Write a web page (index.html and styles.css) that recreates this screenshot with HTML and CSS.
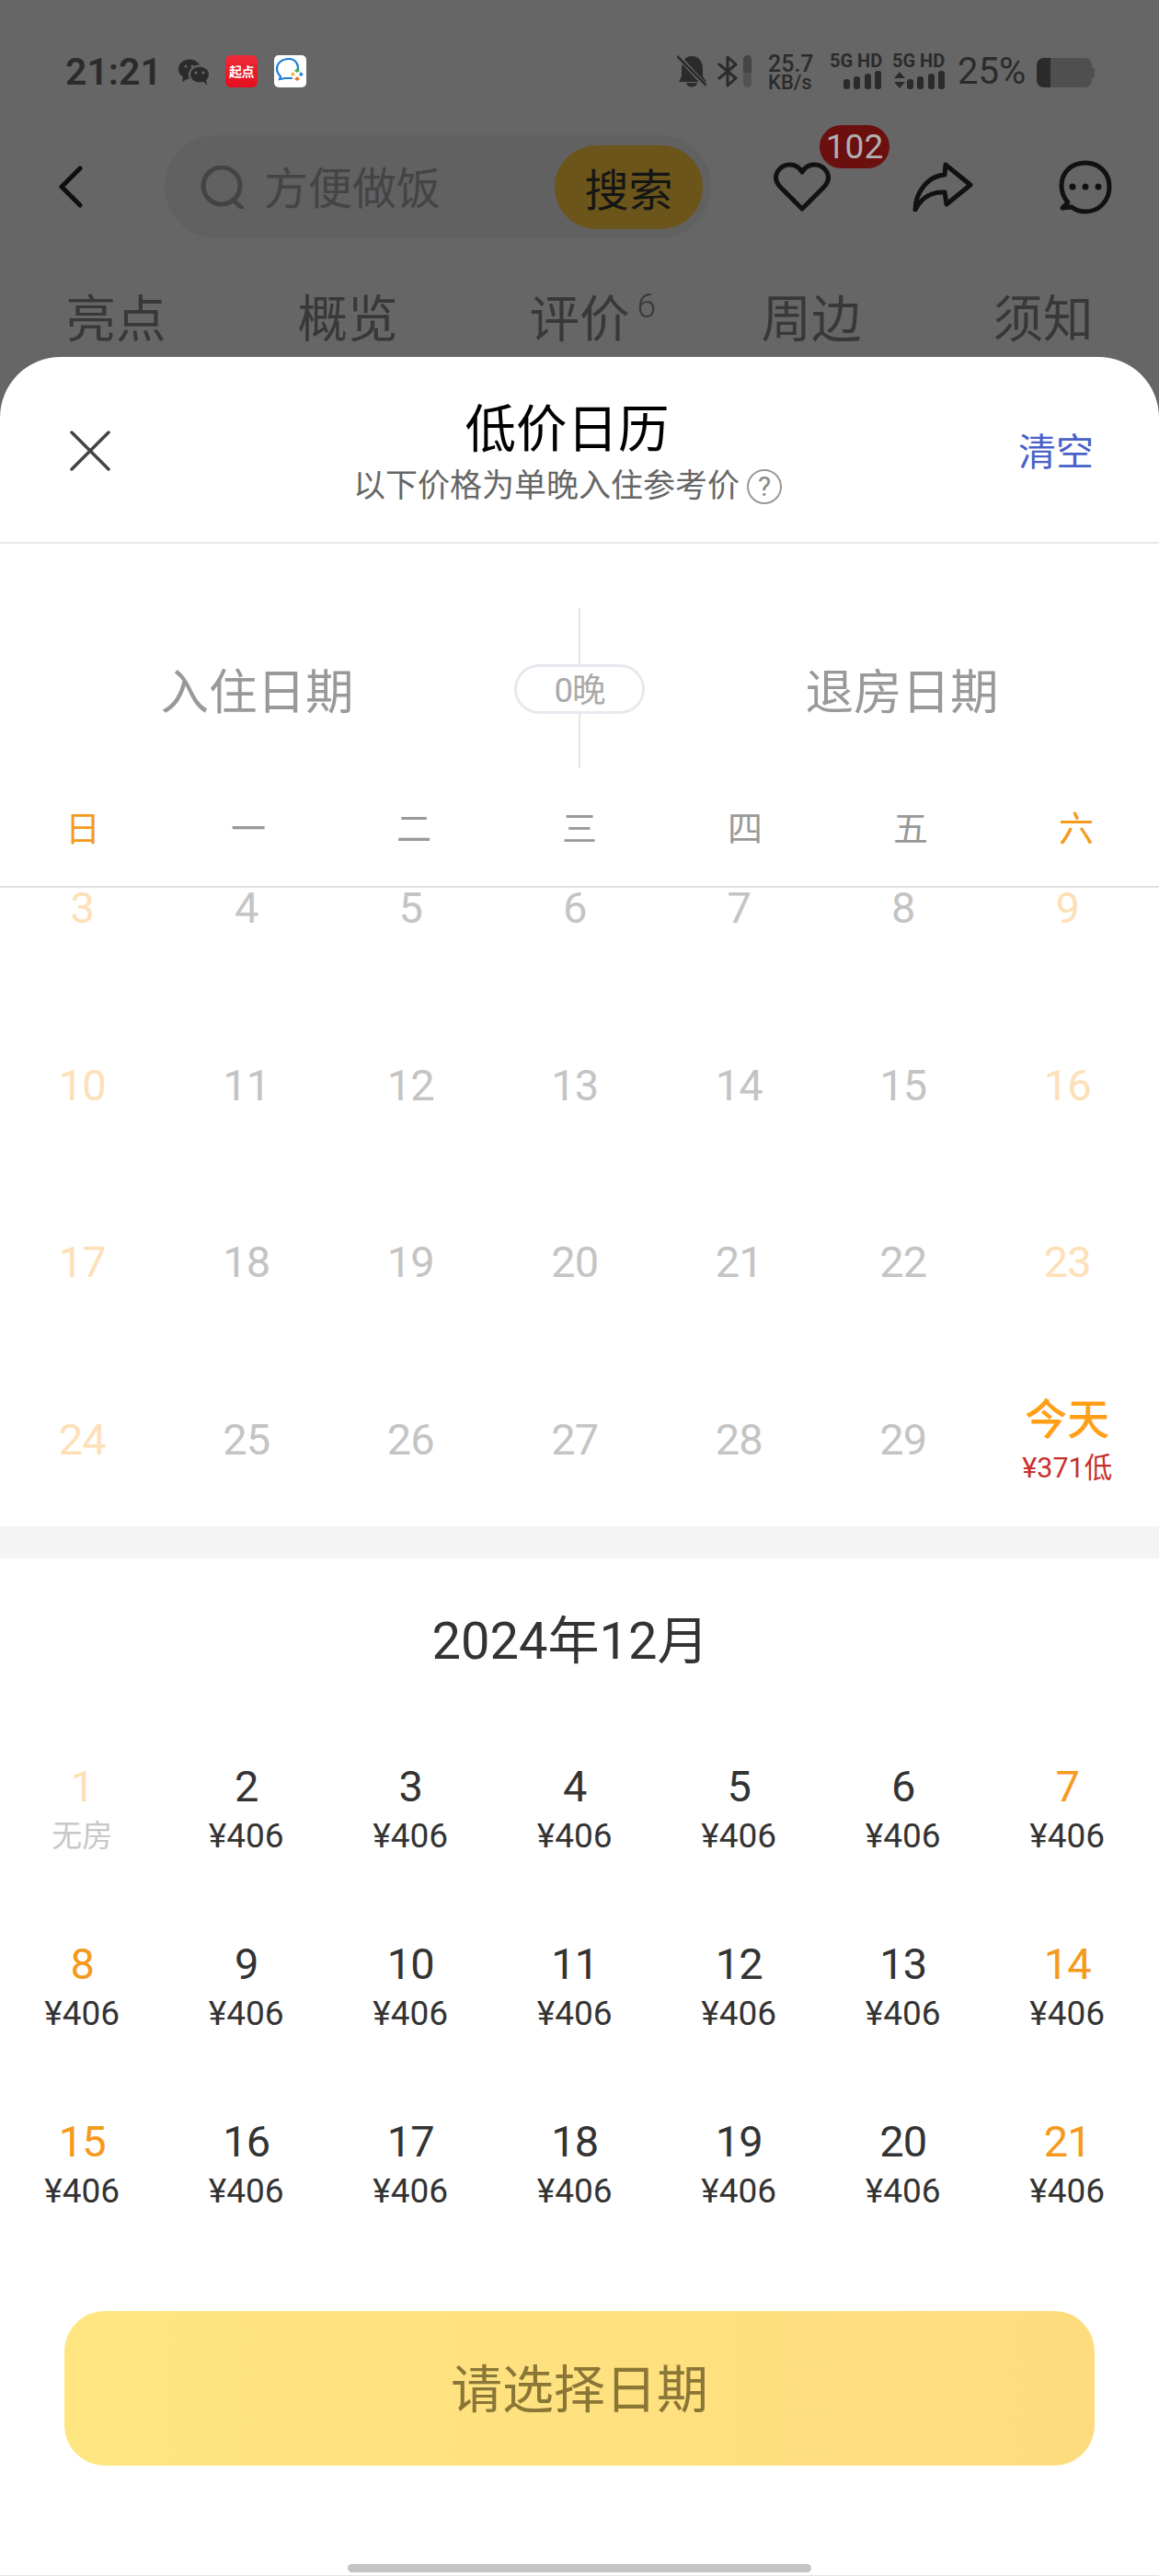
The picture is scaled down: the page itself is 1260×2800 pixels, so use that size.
FILE: index.html
```html
<!DOCTYPE html>
<html lang="zh">
<head>
<meta charset="utf-8">
<title>低价日历</title>
<link rel="stylesheet" href="styles.css">
</head>
<body>
<div class="screen">
  <header class="status">
    <span class="time">21:21</span>
    <svg class="ic-wechat" viewBox="0 0 34 29"><ellipse cx="12" cy="11" rx="12" ry="10.5" fill="#2b2b2b"/><path d="M5 19 L4 25 L11 21Z" fill="#2b2b2b"/><ellipse cx="23" cy="17" rx="11" ry="9.5" stroke="#666" stroke-width="2" fill="#2b2b2b"/><path d="M27 24 L31 29 L30 22Z" fill="#2b2b2b"/><circle cx="8" cy="8" r="1.6" fill="#666"/><circle cx="15" cy="8" r="1.6" fill="#666"/><circle cx="19" cy="15" r="1.6" fill="#666"/><circle cx="27" cy="15" r="1.6" fill="#666"/></svg>
    <span class="ic-qidian">起点</span>
    <svg class="ic-docs" viewBox="0 0 35 35"><rect width="35" height="35" rx="5" fill="#fff"/><path d="M24 21 C29 12 24 4 16 4 C8 4 3 9 3 15 C3 19 5 21 7 23 L6 26 L12 25 L20 25" fill="none" stroke="#1a7fd6" stroke-width="2.2"/><path d="M25 17 L28 20 L25 23 L22 20Z" fill="#fff"/><path d="M25 14 L28 17 L25 19 L22 17Z" fill="#4caf50"/><path d="M29 18 L32 21 L29 23 L27 21Z" fill="#2a88d8"/><path d="M25 23 L28 26 L25 28 L22 26Z" fill="#e8792c"/><path d="M20 18 L23 21 L20 23 L18 21Z" fill="#f2b632"/></svg>
    <svg class="ic-bell" viewBox="0 0 32 35"><path d="M16 1 C25 1 28 9 28 15 L28 23 L32 29 L2 29 L5 23 L5 15 C5 9 8 1 16 1Z M10 30 L22 30 C21 36 11 36 10 30Z" fill="#2b2b2b"/><path d="M2 2 L31 33" stroke="#666" stroke-width="5"/><path d="M0 1 L32 33" stroke="#2b2b2b" stroke-width="2.6"/></svg>
    <svg class="ic-bt" viewBox="0 0 22 35"><path d="M2 10 L20 25 L11 33 L11 2 L20 10 L2 25" fill="none" stroke="#2b2b2b" stroke-width="3" stroke-linejoin="round" stroke-linecap="round"/></svg>
    <span class="wifi-level"></span>
    <div class="speed"><span class="speed-num">25.7</span><span class="speed-unit">KB/s</span></div>
    <div class="net net-a">
      <span class="net-label">5G HD</span>
      <svg class="net-bars" viewBox="0 0 41 20"><rect x="0" y="9" width="7" height="11" rx="3" fill="#2b2b2b"/><rect x="11" y="6" width="7" height="14" rx="3" fill="#2b2b2b"/><rect x="23" y="3" width="7" height="17" rx="3" fill="#2b2b2b"/><rect x="34" y="0" width="7" height="20" rx="3" fill="#2b2b2b"/></svg>
    </div>
    <div class="net net-b">
      <span class="net-label">5G HD</span>
      <svg class="net-bars-wide" viewBox="0 0 56 20"><path d="M1 8 L7 1 L13 8Z M1 12 L7 19 L13 12Z" fill="#2b2b2b"/><rect x="15" y="9" width="7" height="11" rx="3" fill="#2b2b2b"/><rect x="26" y="6" width="7" height="14" rx="3" fill="#2b2b2b"/><rect x="38" y="3" width="7" height="17" rx="3" fill="#2b2b2b"/><rect x="49" y="0" width="7" height="20" rx="3" fill="#2b2b2b"/></svg>
    </div>
    <span class="pct">25%</span>
    <div class="batt"><span class="batt-fill"></span></div>
  </header>

  <nav class="nav">
    <svg class="ic-back" viewBox="0 0 26 46"><path d="M23 3 L3 23 L23 43" fill="none" stroke="#0f0f0f" stroke-width="5" stroke-linecap="round" stroke-linejoin="round"/></svg>
    <div class="search">
      <svg class="ic-search" viewBox="0 0 47 47"><circle cx="23" cy="22" r="20" fill="none" stroke="#444" stroke-width="5"/><path d="M35 37 L45 46" stroke="#444" stroke-width="5" stroke-linecap="round"/></svg>
      <span class="search-text">方便做饭</span>
      <span class="search-btn">搜索</span>
    </div>
    <div class="fav">
      <svg class="ic-heart" viewBox="0 0 62 54"><path d="M31 51 L7 27 C-4 14 8 3 18 3 C24 3 28 6 31 11 C34 6 38 3 44 3 C54 3 66 14 55 27 Z" fill="none" stroke="#111" stroke-width="5" stroke-linejoin="round"/></svg>
      <span class="badge">102</span>
    </div>
    <svg class="ic-share" viewBox="0 0 66 54"><path d="M36 3 L63 25 L37 46 L35 33 C22 32 10 38 3 52 C3 32 18 15 35 14 Z" fill="none" stroke="#111" stroke-width="5" stroke-linejoin="round"/></svg>
    <svg class="ic-chat" viewBox="0 0 58 59"><path d="M10 46 C4 39 3 32 3 28 C3 13 14 3 29 3 C44 3 55 14 55 29 C55 44 44 56 29 56 C23 56 18 54 14 51 L4 52 Z" fill="none" stroke="#111" stroke-width="5" stroke-linejoin="round"/><circle cx="15" cy="29" r="3.5" fill="#111"/><circle cx="29" cy="29" r="3.5" fill="#111"/><circle cx="43" cy="29" r="3.5" fill="#111"/></svg>
  </nav>

  <div class="tabs">
    <span class="tab">亮点</span>
    <span class="tab">概览</span>
    <span class="tab"><span class="tab-inner">评价<sup class="tab-sup">6</sup></span></span>
    <span class="tab">周边</span>
    <span class="tab">须知</span>
  </div>

  <section class="sheet">
    <div class="sheet-head">
      <svg class="ic-close" viewBox="0 0 44 44"><path d="M2 2 L42 42 M42 2 L2 42" stroke="#444" stroke-width="3.5" stroke-linecap="round"/></svg>
      <div class="sheet-title-box">
        <div class="sheet-title">低价日历</div>
        <div class="sheet-sub"><span>以下价格为单晚入住参考价</span><span class="help">?</span></div>
      </div>
      <span class="clear">清空</span>
    </div>

    <div class="range">
      <span class="range-date">入住日期</span>
      <div class="range-mid">
        <span class="range-line range-line-top"></span>
        <span class="nights">0晚</span>
        <span class="range-line range-line-bottom"></span>
      </div>
      <span class="range-date">退房日期</span>
    </div>

    <div class="weekdays">
      <span class="wd wk">日</span><span class="wd">一</span><span class="wd">二</span><span class="wd">三</span><span class="wd">四</span><span class="wd">五</span><span class="wd wk">六</span>
    </div>

    <div class="past">
      <div class="cell off-wk"><span class="d">3</span></div><div class="cell off"><span class="d">4</span></div><div class="cell off"><span class="d">5</span></div><div class="cell off"><span class="d">6</span></div><div class="cell off"><span class="d">7</span></div><div class="cell off"><span class="d">8</span></div><div class="cell off-wk"><span class="d">9</span></div>
      <div class="cell off-wk"><span class="d">10</span></div><div class="cell off"><span class="d">11</span></div><div class="cell off"><span class="d">12</span></div><div class="cell off"><span class="d">13</span></div><div class="cell off"><span class="d">14</span></div><div class="cell off"><span class="d">15</span></div><div class="cell off-wk"><span class="d">16</span></div>
      <div class="cell off-wk"><span class="d">17</span></div><div class="cell off"><span class="d">18</span></div><div class="cell off"><span class="d">19</span></div><div class="cell off"><span class="d">20</span></div><div class="cell off"><span class="d">21</span></div><div class="cell off"><span class="d">22</span></div><div class="cell off-wk"><span class="d">23</span></div>
      <div class="cell off-wk"><span class="d">24</span></div><div class="cell off"><span class="d">25</span></div><div class="cell off"><span class="d">26</span></div><div class="cell off"><span class="d">27</span></div><div class="cell off"><span class="d">28</span></div><div class="cell off"><span class="d">29</span></div><div class="cell today"><span class="today-label">今天</span><span class="today-price">¥371低</span></div>
    </div>

    <div class="band"></div>

    <h2 class="month">2024年12月</h2>

    <div class="days">
      <div class="cell off-wk"><span class="d">1</span><span class="p p-none">无房</span></div>
      <div class="cell"><span class="d">2</span><span class="p">¥406</span></div>
      <div class="cell"><span class="d">3</span><span class="p">¥406</span></div>
      <div class="cell"><span class="d">4</span><span class="p">¥406</span></div>
      <div class="cell"><span class="d">5</span><span class="p">¥406</span></div>
      <div class="cell"><span class="d">6</span><span class="p">¥406</span></div>
      <div class="cell wkend"><span class="d">7</span><span class="p">¥406</span></div>
      <div class="cell wkend"><span class="d">8</span><span class="p">¥406</span></div>
      <div class="cell"><span class="d">9</span><span class="p">¥406</span></div>
      <div class="cell"><span class="d">10</span><span class="p">¥406</span></div>
      <div class="cell"><span class="d">11</span><span class="p">¥406</span></div>
      <div class="cell"><span class="d">12</span><span class="p">¥406</span></div>
      <div class="cell"><span class="d">13</span><span class="p">¥406</span></div>
      <div class="cell wkend"><span class="d">14</span><span class="p">¥406</span></div>
      <div class="cell wkend"><span class="d">15</span><span class="p">¥406</span></div>
      <div class="cell"><span class="d">16</span><span class="p">¥406</span></div>
      <div class="cell"><span class="d">17</span><span class="p">¥406</span></div>
      <div class="cell"><span class="d">18</span><span class="p">¥406</span></div>
      <div class="cell"><span class="d">19</span><span class="p">¥406</span></div>
      <div class="cell"><span class="d">20</span><span class="p">¥406</span></div>
      <div class="cell wkend"><span class="d">21</span><span class="p">¥406</span></div>
    </div>

    <div class="cta">请选择日期</div>
    <div class="home-bar"></div>
    <div class="bottom-line"></div>
  </section>
</div>
</body>
</html>
```

FILE: styles.css
```css
* { box-sizing: border-box; }
html, body { margin: 0; padding: 0; }
body {
  width: 1260px;
  height: 2800px;
  overflow: hidden;
  background: #666;
  font-family: Roboto, "Noto Sans CJK SC", sans-serif;
  color: #333;
}
.screen { width: 1260px; height: 2800px; display: flex; flex-direction: column; }

/* status bar */
.status { height: 147px; padding: 58px 70px 0 71px; display: flex; align-items: flex-start; color: #2b2b2b; flex: none; }
.status > * { flex: none; }
.time { font-size: 41px; font-weight: 600; line-height: 40px; width: 103px; }
.ic-wechat { width: 34px; height: 29px; margin: 6px 0 0 20px; }
.ic-qidian { width: 35px; height: 35px; margin: 2px 0 0 17px; border-radius: 6px; background: linear-gradient(#ee2b3b, #e40d1d); color: #fff; font: 700 14px/35px "Noto Sans CJK SC", sans-serif; text-align: center; white-space: nowrap; letter-spacing: -0.5px; }
.ic-docs { width: 35px; height: 35px; margin: 2px 0 0 18px; }
.ic-bell { width: 32px; height: 35px; margin: 2px 0 0 403px; }
.ic-bt { width: 22px; height: 35px; margin: 2px 0 0 12px; }
.wifi-level { width: 9px; height: 35px; margin: 2px 0 0 6px; border-radius: 5px; background: linear-gradient(#454545 0 55%, #525252 55%); }
.speed { width: 56px; margin: 1px 0 0 18px; display: flex; flex-direction: column; }
.speed-num { font-size: 25px; font-weight: 500; line-height: 22px; }
.speed-unit { font-size: 22px; font-weight: 500; line-height: 18px; }
.net { display: flex; flex-direction: column; margin-top: -2px; }
.net-a { width: 58px; margin-left: 11px; }
.net-b { width: 58px; margin-left: 10px; }
.net-label { font-size: 20px; font-weight: 700; line-height: 20px; white-space: nowrap; }
.net-bars { width: 41px; height: 20px; margin: 1px 0 0 15px; }
.net-bars-wide { width: 56px; height: 20px; margin: 1px 0 0 1px; }
.pct { font-size: 40px; font-weight: 400; line-height: 40px; margin-left: 13px; width: 73px; white-space: nowrap; }
.batt { position: relative; width: 60px; height: 32px; margin: 5px 0 0 13px; border-radius: 8px; background: #4f4f4f; overflow: visible; }
.batt::after { content: ""; position: absolute; left: 60px; top: 10px; width: 3px; height: 12px; border-radius: 0 3px 3px 0; background: #4f4f4f; }
.batt-fill { display: block; width: 15px; height: 32px; border-radius: 8px 0 0 8px; background: #2b2b2b; }

/* nav */
.nav { height: 112px; padding-left: 64px; display: flex; align-items: center; flex: none; }
.ic-back { width: 26px; height: 46px; flex: none; }
.search { width: 594px; height: 112px; margin-left: 89px; padding: 0 9px 0 39px; border-radius: 56px; background: #616161; display: flex; align-items: center; flex: none; }
.ic-search { width: 47px; height: 47px; flex: none; }
.search-text { margin-left: 22px; padding-top: 5px; font-size: 48px; color: #444; flex: 1; line-height: 60px; }
.search-btn { width: 161px; height: 91px; border-radius: 46px; background: #6b551b; color: #151515; font-size: 48px; display: flex; align-items: center; justify-content: center; flex: none; }
.fav { position: relative; width: 62px; height: 54px; margin-left: 68px; flex: none; }
.ic-heart { width: 62px; height: 54px; display: block; }
.badge { position: absolute; left: 50px; top: -40px; width: 76px; height: 47px; border-radius: 24px; background: #6b0f0f; color: #b0b0b0; font-size: 37px; line-height: 47px; text-align: center; }
.ic-share { width: 66px; height: 54px; margin-left: 89px; flex: none; }
.ic-chat { width: 58px; height: 59px; margin-left: 93px; flex: none; }

/* tabs */
.tabs { height: 129px; padding-top: 41px; display: grid; grid-template-columns: repeat(5, 252px); flex: none; }
.tab { height: 88px; font-size: 54.5px; line-height: 94px; text-align: center; color: #383838; }
.tab-inner { position: relative; display: inline-block; }
.tab-sup { position: absolute; left: 117px; top: 3px; font-size: 37px; line-height: 60px; font-weight: 300; vertical-align: baseline; }

/* sheet */
.sheet { height: 2412px; flex: none; background: #fff; border-radius: 66px 66px 0 0; display: flex; flex-direction: column; overflow: hidden; }
.sheet-head { height: 203px; padding-left: 76px; border-bottom: 2px solid #e8e8e8; display: flex; align-items: flex-start; flex: none; }
.ic-close { width: 44px; height: 44px; margin-top: 80px; flex: none; }
.sheet-title-box { width: 465px; margin: 50px 0 0 264px; flex: none; }
.sheet-title { height: 60px; font-size: 55.5px; line-height: 60px; color: #000; text-align: center; font-weight: 400; }
.sheet-sub { margin-top: 11px; height: 40px; display: flex; align-items: center; gap: 8px; font-size: 35px; line-height: 40px; color: #666; white-space: nowrap; }
.help { width: 38px; height: 38px; border: 2.5px solid #999; border-radius: 50%; color: #888; font-size: 30px; line-height: 33px; text-align: center; flex: none; }
.clear { margin: 80px 71px 0 auto; font-size: 41px; line-height: 48px; color: #4a62c8; }

.range { height: 244px; padding-top: 70px; display: grid; grid-template-columns: 559px 142px 559px; flex: none; }
.range-date { height: 174px; font-size: 52.5px; line-height: 184px; color: #999; text-align: center; }
.range-mid { display: flex; flex-direction: column; align-items: center; height: 174px; }
.range-line { width: 2px; background: #e5e5e5; display: block; }
.range-line-top { height: 61px; }
.range-line-bottom { height: 59px; }
.nights { width: 142px; height: 54px; border: 3px solid #e8e8ee; border-radius: 27px; font-size: 36.5px; line-height: 52px; letter-spacing: -1px; text-align: center; color: #aaa; background: #fff; }

.weekdays { height: 130px; border-bottom: 2px solid #e0e0e0; display: grid; grid-template-columns: repeat(7, 180px); flex: none; }
.wd { font-size: 38px; line-height: 132px; text-align: center; color: #999; }
.wk { color: #f59a1d; }

.past { height: 694px; display: grid; grid-template-columns: repeat(7, 178.5px); grid-template-rows: repeat(3, 192.5px) 116.5px; flex: none; }
.cell { display: flex; flex-direction: column; align-items: center; }
.d { font-size: 47px; line-height: 60px; letter-spacing: -1px; color: #333; }
.past .d { line-height: 44px; }
.off .d { color: #c4c4c4; }
.off-wk .d { color: #fde0b8; }
.wkend .d { color: #f59a1d; }
.p { margin-top: 4px; font-size: 37px; line-height: 40px; color: #333; }
.p-none { font-size: 33px; color: #c8c8c8; }
.today { margin-top: -30px; }
.today-label { font-size: 46px; line-height: 60px; color: #ff9f15; font-weight: 500; }
.today-price { margin-top: 3px; font-size: 30.5px; line-height: 40px; color: #c8302c; white-space: nowrap; }

.band { height: 35px; background: #f4f4f4; flex: none; }
.month { width: 1240px; margin: 50px 0 88px; height: 80px; font-size: 56px; font-weight: 400; line-height: 80px; text-align: center; color: #333; flex: none; }
.days { display: grid; grid-template-columns: repeat(7, 178.5px); grid-auto-rows: 193px; flex: none; }

.cta { margin: 21px 70px 0; height: 168px; border-radius: 44px; background: linear-gradient(90deg, #ffe680, #fedc7e); color: #8a7636; font-size: 56px; line-height: 172px; text-align: center; flex: none; }
.home-bar { width: 504px; height: 9px; margin: 107px auto 0; border-radius: 5px; background: #c4c4c4; flex: none; }
.bottom-line { height: 1px; margin-top: 3px; background: #e4e4e4; flex: none; }
```
